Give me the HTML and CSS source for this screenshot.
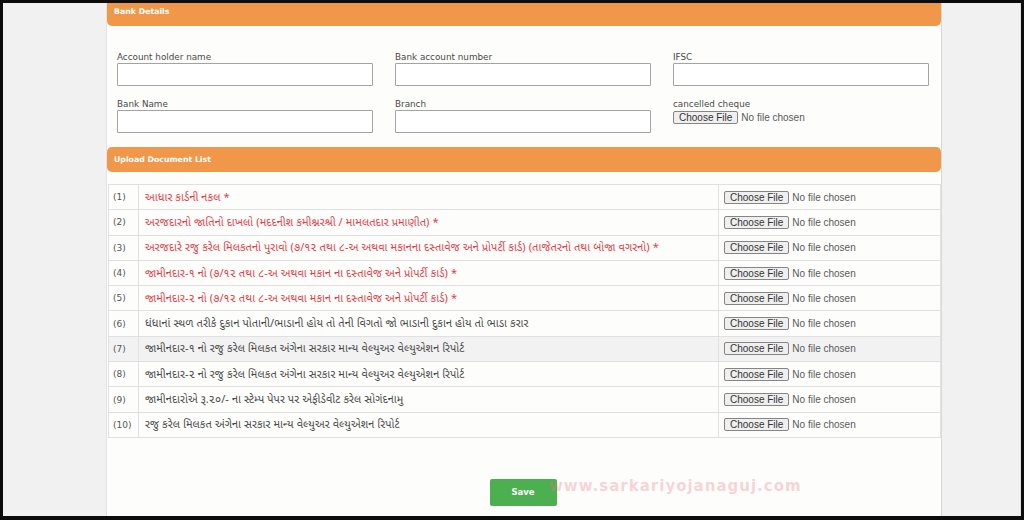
FILE: index.html
```html
<!DOCTYPE html>
<html lang="gu">
<head>
<meta charset="utf-8">
<title>Bank Details</title>
<link rel="stylesheet" href="styles.css">
</head>
<body>
<div class="screen">
  <div class="panel">
    <div class="hdr hdr-top">Bank Details</div>
    <div class="form">
      <div class="field">
        <label class="lbl">Account holder name</label>
        <div class="inp"></div>
      </div>
      <div class="field">
        <label class="lbl">Bank account number</label>
        <div class="inp"></div>
      </div>
      <div class="field">
        <label class="lbl">IFSC</label>
        <div class="inp"></div>
      </div>
      <div class="field">
        <label class="lbl">Bank Name</label>
        <div class="inp"></div>
      </div>
      <div class="field">
        <label class="lbl">Branch</label>
        <div class="inp"></div>
      </div>
      <div class="field">
        <label class="lbl">cancelled cheque</label>
        <div class="file file-cheque"><span class="file-btn">Choose File</span><span class="file-none">No file chosen</span></div>
      </div>
    </div>

    <div class="hdr hdr-docs">Upload Document List</div>

    <table class="docs">
      <tr><td class="num">(1)</td><td class="doc req">આધાર કાર્ડની નકલ *</td><td class="up"><div class="file"><span class="file-btn">Choose File</span><span class="file-none">No file chosen</span></div></td></tr>
      <tr><td class="num">(2)</td><td class="doc req">અરજદારનો જાતિનો દાખલો (મદદનીશ કમીશ્નરશ્રી / મામલતદાર પ્રમાણીત) *</td><td class="up"><div class="file"><span class="file-btn">Choose File</span><span class="file-none">No file chosen</span></div></td></tr>
      <tr><td class="num">(3)</td><td class="doc req">અરજદારે રજુ કરેલ મિલકતનો પુરાવો (૭/૧૨ તથા ૮-અ અથવા મકાનના દસ્તાવેજ અને પ્રોપર્ટી કાર્ડ) (તાજેતરનો તથા બોજા વગરનો) *</td><td class="up"><div class="file"><span class="file-btn">Choose File</span><span class="file-none">No file chosen</span></div></td></tr>
      <tr><td class="num">(4)</td><td class="doc req">જામીનદાર-૧ નો (૭/૧૨ તથા ૮-અ અથવા મકાન ના દસ્તાવેજ અને પ્રોપર્ટી કાર્ડ) *</td><td class="up"><div class="file"><span class="file-btn">Choose File</span><span class="file-none">No file chosen</span></div></td></tr>
      <tr><td class="num">(5)</td><td class="doc req">જામીનદાર-૨ નો (૭/૧૨ તથા ૮-અ અથવા મકાન ના દસ્તાવેજ અને પ્રોપર્ટી કાર્ડ) *</td><td class="up"><div class="file"><span class="file-btn">Choose File</span><span class="file-none">No file chosen</span></div></td></tr>
      <tr><td class="num">(6)</td><td class="doc">ધંધાનાં સ્થળ તરીકે દુકાન પોતાની/ભાડાની હોય તો તેની વિગતો જો ભાડાની દુકાન હોય તો ભાડા કરાર</td><td class="up"><div class="file"><span class="file-btn">Choose File</span><span class="file-none">No file chosen</span></div></td></tr>
      <tr class="hover"><td class="num">(7)</td><td class="doc">જામીનદાર-૧ નો રજુ કરેલ મિલકત અંગેના સરકાર માન્ય વેલ્યુઅર વેલ્યુએશન રિપોર્ટ</td><td class="up"><div class="file"><span class="file-btn">Choose File</span><span class="file-none">No file chosen</span></div></td></tr>
      <tr><td class="num">(8)</td><td class="doc">જામીનદાર-૨ નો રજુ કરેલ મિલકત અંગેના સરકાર માન્ય વેલ્યુઅર વેલ્યુએશન રિપોર્ટ</td><td class="up"><div class="file"><span class="file-btn">Choose File</span><span class="file-none">No file chosen</span></div></td></tr>
      <tr><td class="num">(9)</td><td class="doc">જામીનદારોએ રૂ.૨૦/- ના સ્ટેમ્પ પેપર પર એફીડેવીટ કરેલ સોગંદનામુ</td><td class="up"><div class="file"><span class="file-btn">Choose File</span><span class="file-none">No file chosen</span></div></td></tr>
      <tr><td class="num">(10)</td><td class="doc">રજુ કરેલ મિલકત અંગેના સરકાર માન્ય વેલ્યુઅર વેલ્યુએશન રિપોર્ટ</td><td class="up"><div class="file"><span class="file-btn">Choose File</span><span class="file-none">No file chosen</span></div></td></tr>
    </table>

    <div class="actions"><span class="save">Save</span></div>
    <div class="watermark">www.sarkariyojanaguj.com</div>
  </div>
</div>
</body>
</html>
```

FILE: styles.css
```css
* { box-sizing: border-box; }

html, body {
  margin: 0;
  padding: 0;
  background: #0c0c0c;
}

body {
  padding: 3px 3px 4px 3px;
  width: 1024px;
  height: 520px;
  overflow: hidden;
}

.screen {
  height: 513px;
  background: #f1f1f1;
  border-right: 1px solid #e0e0e0;
  overflow: hidden;
}

.panel {
  position: relative;
  margin-left: 103px;
  width: 836px;
  height: 513px;
  background: #fdfdfb;
  border-left: 1px solid #e3e3e3;
  border-right: 1px solid #d9d9d9;
  font-family: "DejaVu Sans", Verdana, sans-serif;
}

.hdr {
  background: #f0974a;
  color: #ffffff;
  font-weight: bold;
  font-size: 7.8px;
  padding-left: 7px;
}

.hdr-top {
  height: 23px;
  line-height: 18px;
  border-radius: 0 0 5px 5px;
}

.hdr-docs {
  height: 25px;
  line-height: 25px;
  margin-top: 14px;
  border-radius: 5px;
}

.form {
  display: grid;
  grid-template-columns: 256px 256px 256px;
  column-gap: 22px;
  row-gap: 12px;
  padding-left: 10px;
  margin-top: 25px;
}

.field {
  display: flex;
  flex-direction: column;
}

.lbl {
  font-size: 8.8px;
  line-height: 12px;
  height: 12px;
  color: #4a4a4a;
}

.inp {
  height: 23px;
  background: #ffffff;
  border: 1px solid #a3a3a3;
  border-radius: 1px;
}

.file {
  display: flex;
  align-items: center;
  gap: 3px;
  font-family: "Liberation Sans", Arial, sans-serif;
  font-size: 10px;
}

.file-cheque {
  margin-top: 1px;
}

.file-btn {
  display: inline-block;
  height: 13px;
  line-height: 11px;
  padding: 0 5px;
  background: #efefef;
  border: 1px solid #858585;
  border-radius: 2px;
  color: #333;
}

.file-none {
  color: #5a5a5a;
}

.docs {
  margin: 12px 1px 0 1px;
  width: 833px;
  border-collapse: collapse;
  table-layout: fixed;
  border: 1px solid #e2e2e2;
}

.docs td {
  height: 25.3px;
  border-top: 1px solid #e0e0e0;
  border-bottom: 1px solid #e0e0e0;
  vertical-align: middle;
  padding: 0;
}

.docs tr.hover td {
  background: #f2f2f2;
}

.num {
  width: 30px;
  font-size: 9px;
  color: #555;
  padding-left: 4px !important;
  border-right: 1px solid #e2e2e2;
}

.doc {
  width: 580px;
  padding-left: 6px !important;
  padding-top: 1px !important;
  font-family: "Noto Sans Gujarati", "Lohit Gujarati", "Shruti", "Noto Sans", "DejaVu Sans", sans-serif;
  font-size: 11px;
  letter-spacing: 0.1px;
  color: #4a4a4a;
  white-space: nowrap;
  overflow: hidden;
  border-right: 1px solid #e2e2e2;
}

.doc.req {
  color: #de4048;
}

.up {
  padding-left: 5px !important;
}

.actions {
  display: flex;
  justify-content: center;
  margin-top: 41px;
}

.save {
  display: inline-block;
  width: 67px;
  height: 27px;
  line-height: 27px;
  text-align: center;
  background: #4cb050;
  border-radius: 2px;
  color: #fff;
  font-weight: bold;
  font-size: 8.5px;
  margin-right: 2px;
}

.watermark {
  position: absolute;
  left: 442px;
  top: 474px;
  font-family: "DejaVu Sans", Verdana, sans-serif;
  font-weight: bold;
  font-size: 15px;
  letter-spacing: 1px;
  color: rgba(233, 120, 138, 0.32);
  white-space: nowrap;
}
```
